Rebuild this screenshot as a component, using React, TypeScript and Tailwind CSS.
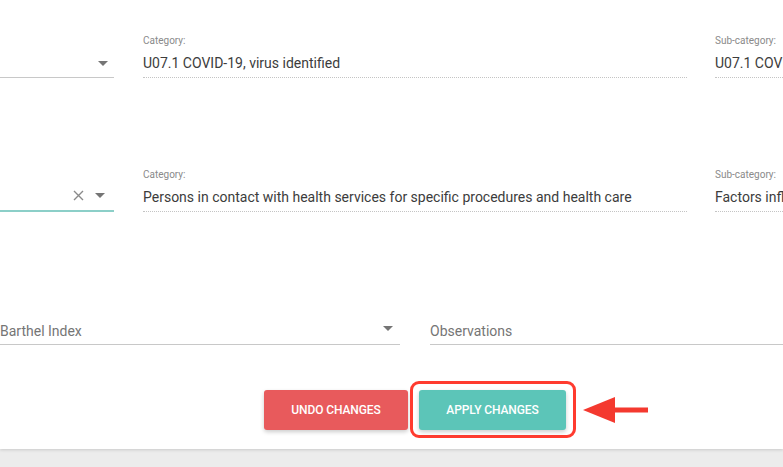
import React from 'react';

const Caret = () => (
  <svg width="10" height="5" viewBox="0 0 10 5" className="shrink-0">
    <path d="M0 0 L10 0 L5 5 Z" fill="#757575" />
  </svg>
);

const Clear = () => (
  <svg width="11" height="11" viewBox="0 0 11 11" className="shrink-0">
    <path d="M1 1 L10 10 M10 1 L1 10" stroke="#8a8a8a" strokeWidth="1.4" />
  </svg>
);

// read-only field with small label and dotted underline
const ReadField = ({ label, value, className }: { label: string; value: string; className: string }) => (
  <div className={`flex flex-col ${className}`}>
    <div className="text-[10px] leading-[12px] text-[#8a8a8a]">{label}</div>
    <div className="mt-[6px] pb-[4px] border-b border-dotted border-[#c4c4c4] text-[14px] leading-[20px] text-[#3c3c3c] whitespace-nowrap overflow-hidden">
      {value}
    </div>
  </div>
);

const App: React.FC = () => {
  return (
    <div className="w-[783px] h-[467px] bg-[#ececec] overflow-hidden" style={{ fontFamily: 'Roboto, "Liberation Sans", sans-serif' }}>
      <div className="h-[449px] bg-white shadow-[0_1px_3px_rgba(0,0,0,0.15)] flex flex-col pt-[35px]">
        {/* Row 1 */}
        <div className="flex items-end">
          <div className="w-[114px] shrink-0 h-[25px] border-b border-[#c8c8c8] flex items-center justify-end pr-[6px] pb-[4px]">
            <Caret />
          </div>
          <ReadField label="Category:" value="U07.1 COVID-19, virus identified" className="ml-[29px] w-[544px] shrink-0" />
          <ReadField label="Sub-category:" value="U07.1 COVID-19, virus identified" className="ml-[28px] w-[200px] shrink-0" />
        </div>

        {/* Row 2 */}
        <div className="flex items-end mt-[91px]">
          <div className="w-[114px] shrink-0 h-[25px] border-b-2 border-[#8ccfc8] flex items-center justify-end gap-[11px] pr-[9px] pb-[6px]">
            <Clear />
            <Caret />
          </div>
          <ReadField
            label="Category:"
            value="Persons in contact with health services for specific procedures and health care"
            className="ml-[29px] w-[544px] shrink-0"
          />
          <ReadField label="Sub-category:" value="Factors influencing health status" className="ml-[28px] w-[200px] shrink-0" />
        </div>

        {/* Row 3 */}
        <div className="flex mt-[107px]">
          <div className="w-[400px] shrink-0 flex items-center justify-between pb-[1px] border-b border-[#c8c8c8] pr-[7px]">
            <span className="text-[14px] leading-[20px] text-[#757575]">Barthel Index</span>
            <div className="-mt-[6px]">
              <Caret />
            </div>
          </div>
          <div className="ml-[30px] w-[400px] shrink-0 pb-[1px] border-b border-[#c8c8c8]">
            <span className="text-[14px] leading-[20px] text-[#757575]">Observations</span>
          </div>
        </div>

        {/* Actions */}
        <div className="flex mt-[45px] pl-[264px] items-center">
          <button className="w-[144px] h-[40px] rounded-[3px] bg-[#e85a5c] text-white text-[12px] font-medium tracking-[-0.1px] shadow-[0_2px_4px_rgba(0,0,0,0.2)]">
            UNDO CHANGES
          </button>
          <div className="relative ml-[11px]">
            <div className="absolute -left-[9px] -top-[9px] -right-[10px] -bottom-[8px] border-[3px] border-[#ff3b2f] rounded-[9px]" />
            <button className="relative w-[147px] h-[40px] rounded-[3px] bg-[#5cc5b8] text-white text-[12px] font-medium tracking-[-0.1px] shadow-[0_2px_4px_rgba(0,0,0,0.2)]">
              APPLY CHANGES
            </button>
          </div>
          <svg width="66" height="26" viewBox="0 0 66 26" className="ml-[17px]">
            <path d="M0 13 L32 0 L32 26 Z" fill="#f4392f" />
            <rect x="28" y="10.5" width="37" height="5" fill="#f4392f" />
          </svg>
        </div>
      </div>
    </div>
  );
};

export default App;
